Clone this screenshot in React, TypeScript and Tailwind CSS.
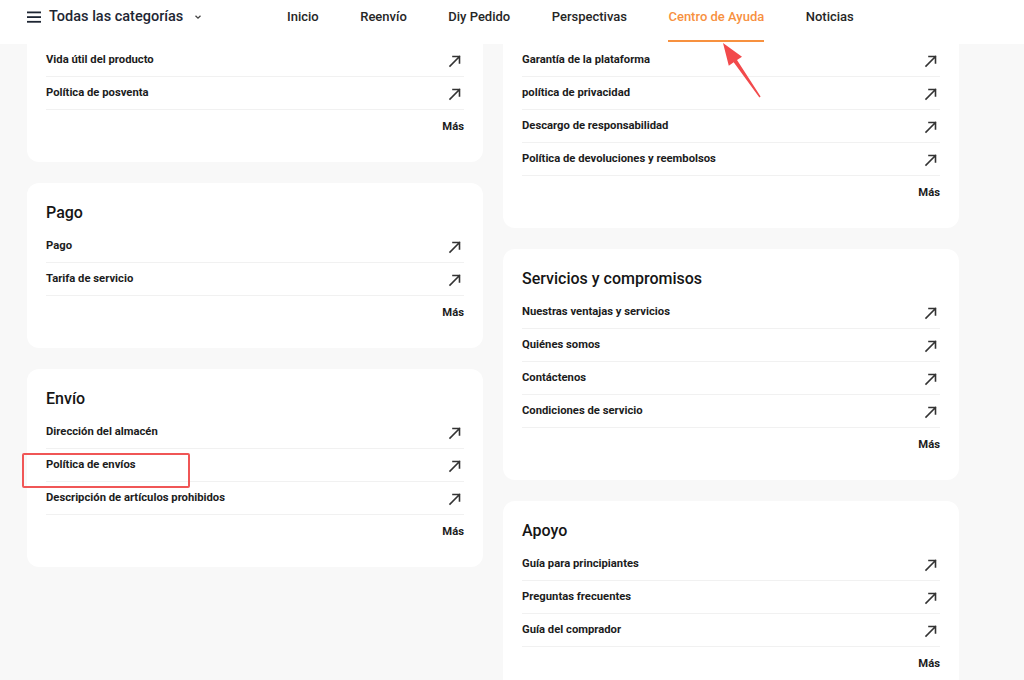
import React from "react";

type Card = { title?: string; items: string[] };

const left: Card[] = [
  { items: ["Vida útil del producto", "Política de posventa"] },
  { title: "Pago", items: ["Pago", "Tarifa de servicio"] },
  {
    title: "Envío",
    items: ["Dirección del almacén", "Política de envíos", "Descripción de artículos prohibidos"],
  },
];

const right: Card[] = [
  {
    items: [
      "Garantía de la plataforma",
      "política de privacidad",
      "Descargo de responsabilidad",
      "Política de devoluciones y reembolsos",
    ],
  },
  {
    title: "Servicios y compromisos",
    items: ["Nuestras ventajas y servicios", "Quiénes somos", "Contáctenos", "Condiciones de servicio"],
  },
  {
    title: "Apoyo",
    items: ["Guía para principiantes", "Preguntas frecuentes", "Guía del comprador"],
  },
];

function ArrowIcon() {
  return (
    <svg width="14" height="14" viewBox="0 0 14 14" fill="none" className="text-[#333]">
      <path d="M2 12L11.5 2.5M5 2.5H11.5V9" stroke="currentColor" strokeWidth="1.6" strokeLinecap="square" />
    </svg>
  );
}

function HelpCard({ card }: { card: Card }) {
  return (
    <div className="rounded-xl bg-white px-[19px] pt-[18px] pb-[19px]">
      <h3 className="h-6 text-[16px] leading-6 font-medium text-[#151515]">{card.title ?? ""}</h3>
      <ul className="mt-[5px]">
        {card.items.map((it) => (
          <li
            key={it}
            className="flex h-[33px] items-center justify-between border-b border-[#f1f1f1] pt-[1px] text-[11.25px] font-bold text-[#1c1c1c]"
          >
            <span>{it}</span>
            <span className="mr-[2px]">
              <ArrowIcon />
            </span>
          </li>
        ))}
      </ul>
      <div className="flex h-[33px] items-center justify-end pt-[1px] text-[11.25px] font-bold text-[#1c1c1c]">Más</div>
    </div>
  );
}

const nav = ["Inicio", "Reenvío", "Diy Pedido", "Perspectivas", "Centro de Ayuda", "Noticias"];

export default function App() {
  return (
    <div className="relative h-[680px] w-full overflow-hidden bg-[#f8f8f8] font-['Roboto',sans-serif]">
      <main className="-mt-[3px] flex items-start gap-5 pl-[27px]">
        <div className="flex w-[456px] flex-col gap-[21px]">
          {left.map((c, i) => (
            <HelpCard key={i} card={c} />
          ))}
        </div>
        <div className="flex w-[456px] flex-col gap-[21px]">
          {right.map((c, i) => (
            <HelpCard key={i} card={c} />
          ))}
        </div>
      </main>

      <header className="absolute inset-x-0 top-0 flex h-11 items-start bg-white pl-[27px]">
        <div className="flex w-[260px] items-center pt-[6px]">
          <svg width="14" height="12" viewBox="0 0 14 12" className="text-[#1e2633]">
            <rect x="0" y="0.5" width="14" height="1.8" fill="currentColor" />
            <rect x="0" y="5.2" width="14" height="1.8" fill="currentColor" />
            <rect x="0" y="9.9" width="14" height="1.8" fill="currentColor" />
          </svg>
          <span className="ml-[8px] text-[14.5px] leading-[22px] font-medium text-[#1e2633]">Todas las categorías</span>
          <svg width="10" height="10" viewBox="0 0 10 10" className="ml-[10px] text-[#444]">
            <path d="M2.5 3.8L5 6.2L7.5 3.8" stroke="currentColor" strokeWidth="1.3" fill="none" />
          </svg>
        </div>
        <nav className="flex gap-[41.5px]">
          {nav.map((n) => {
            const active = n === "Centro de Ayuda";
            return (
              <div key={n} className="relative h-11 pt-[7px]">
                <span
                  className={
                    "block text-[13px] leading-5 font-medium " + (active ? "text-[#f7913f]" : "text-[#262626]")
                  }
                >
                  {n}
                </span>
                {active && <span className="absolute inset-x-0 bottom-[2px] h-[2px] bg-[#f7913f]" />}
              </div>
            );
          })}
        </nav>
      </header>

      <div className="pointer-events-none absolute left-[22px] top-[453px] h-[35px] w-[168px] rounded-[2px] border-2 border-[#f05656]" />
      <svg
        className="pointer-events-none absolute left-[715px] top-[38px]"
        width="50"
        height="64"
        viewBox="0 0 50 64"
      >
        <polygon
          points="8,5 27,18.7 22,21.9 45.6,58.6 44.4,59.4 18.7,24.3 13.8,27.7"
          fill="#f24a4c"
        />
      </svg>
    </div>
  );
}
